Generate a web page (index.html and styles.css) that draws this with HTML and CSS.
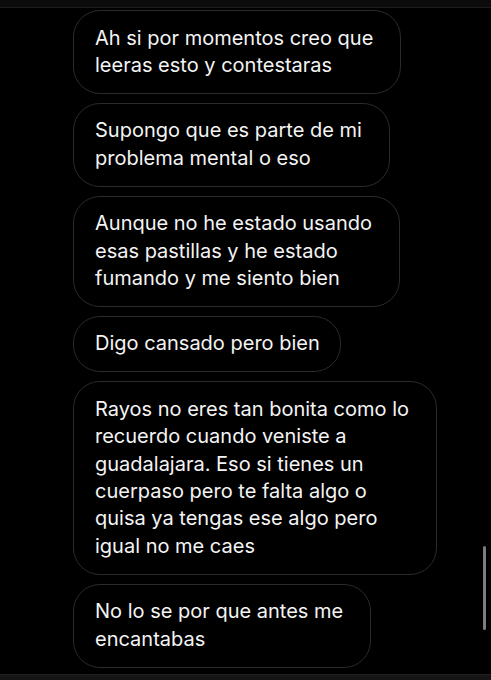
FILE: index.html
```html
<!DOCTYPE html>
<html lang="es">
<head>
<meta charset="utf-8">
<link rel="stylesheet" href="styles.css">
</head>
<body>
<div class="screen">
  <div class="topbar"></div>
  <div class="thread">
    <div class="bubble multi">Ah si por momentos creo que<br>leeras esto y contestaras</div>
    <div class="bubble multi">Supongo que es parte de mi<br>problema mental o eso</div>
    <div class="bubble multi">Aunque no he estado usando<br>esas pastillas y he estado<br>fumando y me siento bien</div>
    <div class="bubble">Digo cansado pero bien</div>
    <div class="bubble multi">Rayos no eres tan bonita como lo<br>recuerdo cuando veniste a<br>guadalajara. Eso si tienes un<br>cuerpaso pero te falta algo o<br>quisa ya tengas ese algo pero<br>igual no me caes</div>
    <div class="bubble multi">No lo se por que antes me<br>encantabas</div>
  </div>
  <div class="scrollbar"></div>
  <div class="bottombar"></div>
</div>
</body>
</html>
```
FILE: styles.css
```css
html, body {
  margin: 0;
  padding: 0;
  background: #000;
}
.screen {
  position: relative;
  width: 491px;
  height: 680px;
  overflow: hidden;
  background: #000;
  display: flex;
  flex-direction: column;
}
.topbar {
  height: 7px;
  background: #0c0c0c;
  border-bottom: 1px solid #1c1c1c;
  flex: none;
}
.thread {
  flex: 1;
  display: flex;
  flex-direction: column;
  align-items: flex-start;
  gap: 9px;
  padding: 2px 0 0 73px;
}
.bubble {
  box-sizing: border-box;
  border: 1px solid #2b2b2b;
  border-radius: 27px;
  padding: 13.5px 20px 13.5px 21px;
  color: #f4f4f4;
  font-family: Inter, "Liberation Sans", sans-serif;
  font-size: 20px;
  line-height: 27.4px;
  white-space: nowrap;
}
.bubble.multi {
  padding-right: 27px;
}
.scrollbar {
  position: absolute;
  right: 5px;
  top: 546px;
  width: 3px;
  height: 84px;
  border-radius: 2px;
  background: #7d7d7d;
}
.bottombar {
  height: 5px;
  background: #151515;
  border-top: 1px solid #222;
  flex: none;
}
```
